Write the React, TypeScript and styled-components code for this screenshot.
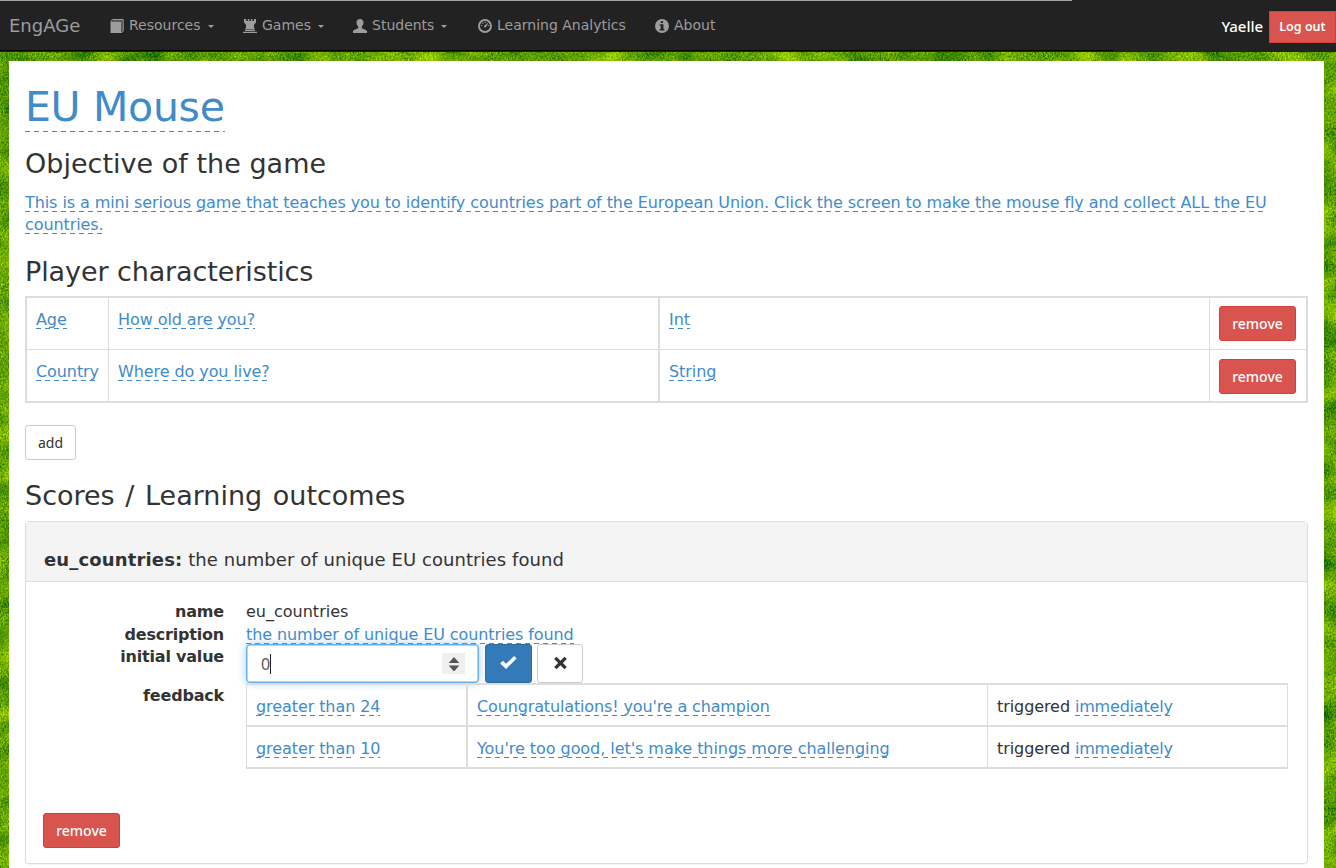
import React from "react";
import styled, { createGlobalStyle } from "styled-components";

const verdana = `"DejaVu Sans", Verdana, sans-serif`;
const sans = `"Noto Sans", "Open Sans", sans-serif`;

const GlobalStyle = createGlobalStyle`
  *, *::before, *::after { box-sizing: border-box; }
  html { height: 100%; overflow: hidden; }
  body { margin: 0; font: 16px/22.5px ${verdana}; color: #333; }
`;

const Shell = styled.div`
  position: relative;
  height: 868px;
  overflow: hidden;
  background: #5a9c00;
`;

const Grass = styled.svg`
  position: absolute;
  inset: 0;
  width: 100%;
  height: 100%;
`;

const Layout = styled.div`
  position: relative;
  display: flex;
  flex-direction: column;
  height: 100%;
`;

const Navbar = styled.nav`
  position: relative;
  display: flex;
  align-items: center;
  flex: none;
  height: 52px;
  padding-left: 9px;
  background: #222;
  color: #9d9d9d;
  &::before {
    content: "";
    position: absolute;
    top: 0;
    left: 0;
    width: 1072px;
    height: 1px;
    background: #a5a5a5;
  }
  &::after {
    content: "";
    position: absolute;
    top: 50px;
    left: 0;
    width: 1114px;
    height: 1px;
    background: #080808;
  }
`;

const Brand = styled.span`
  width: 101px;
  padding-top: 1px;
  font-size: 18px;
`;

const NavItem = styled.a<{ $w: number }>`
  display: flex;
  align-items: center;
  width: ${(p) => p.$w}px;
  height: 22px;
  margin-bottom: 1px;
  font-size: 14px;
  white-space: nowrap;
  svg { flex: none; margin-right: 5px; }
`;

const Caret = styled.i`
  margin: 2px 0 0 7px;
  border: 3px solid transparent;
  border-top-color: currentColor;
  border-bottom: 0;
`;

const UserName = styled.span`
  margin-left: auto;
  margin-right: 6px;
  margin-bottom: 1px;
  color: #fff;
  font: 500 15px/20px ${sans};
  letter-spacing: -0.05px;
`;

const Button = styled.button<{
  $kind: "danger" | "default" | "primary";
  $w: number;
  $h?: number;
  $small?: boolean;
}>`
  display: inline-flex;
  align-items: center;
  justify-content: center;
  flex: none;
  width: ${(p) => p.$w}px;
  height: ${(p) => p.$h || 35}px;
  padding: 0;
  border-radius: ${(p) => (p.$small ? 0 : 3)}px;
  border: 1px solid ${(p) => ({ danger: "#d43f3a", default: "#ccc", primary: "#2e6da4" })[p.$kind]};
  background: ${(p) => ({ danger: "#d9534f", default: "#fff", primary: "#337ab7" })[p.$kind]};
  color: ${(p) => (p.$kind === "default" ? "#333" : "#fff")};
  font: ${(p) => (p.$small ? "600 12.5px" : p.$kind === "danger" ? "500 14px" : "400 14px")}/20px ${sans};
  ${(p) => p.$small && "margin-top: 2px;"}
`;

const Page = styled.main`
  flex: 1;
  margin: 9px 12px 0 9px;
  padding: 21px 16px 0;
  background: #fff;
`;

const Editable = styled.a<{ $ls?: number }>`
  color: #428bca;
  letter-spacing: ${(p) => p.$ls ?? -0.08}px;
  background: repeating-linear-gradient(90deg, #428bca 0 5px, transparent 5px 9px) left bottom / 100% 1px no-repeat;
  box-decoration-break: clone;
  -webkit-box-decoration-break: clone;
`;

const Title = styled.h1`
  margin: 0;
  height: 64px;
  font-size: 41px;
  font-weight: 400;
  line-height: 50px;
  a { display: inline-block; height: 49.5px; }
`;

const Heading = styled.h2<{ $top: number; $ls?: number; $ws?: number }>`
  margin: ${(p) => p.$top}px 0 0;
  font-size: 27px;
  font-weight: 400;
  line-height: 36px;
  letter-spacing: ${(p) => p.$ls || 0}px;
  word-spacing: ${(p) => p.$ws || 0}px;
`;

const Objective = styled.p`
  margin: 10px 0 0;
  line-height: 22px;
`;

const Characteristics = styled.div`
  margin-top: 6px;
  border: 2px solid #ddd;
`;

const CharRow = styled.div`
  display: grid;
  grid-template-columns: 81px 550px 551px 1fr;
  height: 51px;
  & + & { border-top: 1px solid #ddd; height: 52px; }
`;

const Cell = styled.div<{ $line?: number; $pad?: number }>`
  padding: ${(p) => p.$pad ?? 11}px 9px 0;
  border-left: ${(p) => p.$line || 0}px solid #ddd;
  white-space: nowrap;
`;

const AddRow = styled.div`
  display: flex;
  margin-top: 22px;
`;

const Panel = styled.section`
  margin-top: 7px;
  height: 343px;
  border: 1px solid #ddd;
  border-radius: 4px;
  box-shadow: 0 1px 1px rgba(0, 0, 0, 0.05);
`;

const PanelHeading = styled.header`
  height: 60px;
  padding: 27px 18px 0;
  background: #f4f4f4;
  border-bottom: 1px solid #ddd;
  font-size: 18px;
  letter-spacing: 0.07px;
  b { letter-spacing: 0.15px; }
`;

const Details = styled.dl`
  display: grid;
  grid-template-columns: 198px 1fr;
  grid-template-rows: 22.5px 22.5px 39px auto;
  column-gap: 22px;
  margin: 19px 19px 0 0;
  dt { text-align: right; font-weight: 700; letter-spacing: -0.2px; }
  dd { margin: 0; }
`;

const EditRow = styled.div`
  display: flex;
  align-items: center;
  gap: 5px;
  height: 39px;
  margin-top: -2px;
`;

const NumberField = styled.div`
  display: flex;
  align-items: center;
  justify-content: space-between;
  width: 233px;
  height: 39px;
  margin-right: 1px;
  padding: 0 13px 0 14px;
  background: #fff;
  border: 1px solid #66afe9;
  border-radius: 4px;
  box-shadow: 0 0 8px rgba(102, 175, 233, 0.6), inset 0 0 0 0.5px #66afe9;
  color: #555;
  font: 16px/20px ${sans};
`;

const Typed = styled.span`
  border-right: 1px solid #222;
`;

const Spinner = styled.span`
  display: flex;
  align-items: center;
  justify-content: center;
  width: 23px;
  height: 21px;
  background: #efefef;
`;

const Feedback = styled.div`
  margin-top: -2px;
  border: 1px solid #ddd;
  border-width: 2px 1px;
`;

const FeedbackRow = styled.div`
  display: grid;
  grid-template-columns: 219px 521px 1fr;
  height: 40px;
  letter-spacing: -0.08px;
  & + & { border-top: 2px solid #ddd; height: 42px; }
`;

const PanelFooter = styled.footer`
  display: flex;
  margin: 44px 0 0 17px;
`;

const Glyph = ({ name, size = 14 }: { name: string; size?: number }) => (
  <svg width={size} height={size} viewBox="0 0 14 14" fill="currentColor">
    {name === "book" && (
      <>
        <path d="M.5 2.600H11V14H.5Z" />
        <path d="M.6 2.400 2.600.5H13.200V12.200L11 14" fill="none" stroke="currentColor" strokeWidth="1" />
        <path d="M1.500 2.600 3 1H12.700V12L11 13.500V2.600Z" opacity=".4" />
      </>
    )}
    {name === "tower" && (
      <path d="M1 0h2.200v2h1.600V0h1.500v2h1.600V0h1.500v2H11V0H13v3.600L11 5.800v2.700l1 2H2l1-2V5.800L1 3.600ZM2 11h10v1H2ZM0 12.800h14V14H0Z" />
    )}
    {name === "user" && (
      <path d="M7 0c2.200 0 3.500 1.400 3.500 3.600 0 1.700-.7 3.200-1.700 4v1.500c0 .7 4.900 1.600 5.200 3.200V14H0v-1.700c.3-1.600 5.200-2.500 5.200-3.200V7.600c-1-.8-1.700-2.300-1.700-4C3.500 1.400 4.800 0 7 0Z" />
    )}
    {name === "dashboard" && (
      <>
        <circle cx="7" cy="7" r="6" fill="none" stroke="currentColor" strokeWidth="1.900" />
        <path d="M6 7 10.600 3.300 8 8.200Q7 9 6.200 8.200Z" />
        <circle cx="3.600" cy="6.600" r=".7" />
        <circle cx="4.800" cy="4.300" r=".7" />
        <circle cx="7.200" cy="3.400" r=".7" />
        <circle cx="10.400" cy="6.600" r=".7" />
      </>
    )}
    {name === "info" && (
      <path
        fillRule="evenodd"
        d="M7 0a7 7 0 1 1 0 14A7 7 0 0 1 7 0ZM5.700 2.200v1.900h2.400V2.200ZM4.700 5.300v1.200h1v3.600h-1v1.300h4.700v-1.300h-1V5.300Z"
      />
    )}
    {name === "ok" && <path d="M.2 6.900 2.300 4.700 5 7.300 11.600.8 13.700 2.900 5 11.500Z" />}
    {name === "remove" && (
      <path d="M3.300.7 7 4.400l3.700-3.700 2.200 2.200L9.200 6.500l3.700 3.700-2.200 2.200L7 8.700l-3.700 3.700-2.200-2.200L4.800 6.500 1.100 2.900Z" />
    )}
    {name === "spin" && <path d="M7 0 12.300 6H1.700ZM7 14.500 12.300 8.500H1.700Z" />}
  </svg>
);

const characteristics = [
  { name: "Age", question: "How old are you?", type: "Int", pad: 8 },
  { name: "Country", question: "Where do you live?", type: "String", pad: 9 },
];

const feedback = [
  { limit: "24", message: "Coungratulations! you're a champion", spacing: -0.14 },
  { limit: "10", message: "You're too good, let's make things more challenging", spacing: -0.05 },
];

export default function App() {
  return (
    <Shell>
      <GlobalStyle />
      <Grass>
        <filter id="grass" x="0" y="0" width="100%" height="100%" colorInterpolationFilters="sRGB">
          <feTurbulence type="fractalNoise" baseFrequency="0.03 0.04" numOctaves="2" seed="4" result="coarse" />
          <feTurbulence type="fractalNoise" baseFrequency="0.6 0.5" numOctaves="2" seed="9" result="fine" />
          <feComposite in="coarse" in2="fine" operator="arithmetic" k2="0.5" k3="0.5" />
          <feColorMatrix values="1.4 0 0 0 -0.32  1.05 0 0 0 0.11  0 0 0 0 0.01  0 0 0 0 1" />
        </filter>
        <rect width="100%" height="100%" filter="url(#grass)" />
      </Grass>
      <Layout>
        <Navbar>
          <Brand>EngAGe</Brand>
          <NavItem $w={133}><Glyph name="book" />Resources<Caret /></NavItem>
          <NavItem $w={110}><Glyph name="tower" />Games<Caret /></NavItem>
          <NavItem $w={125}><Glyph name="user" />Students<Caret /></NavItem>
          <NavItem $w={177}><Glyph name="dashboard" />Learning Analytics</NavItem>
          <NavItem $w={70}><Glyph name="info" />About</NavItem>
          <UserName>Yaelle</UserName>
          <Button $kind="danger" $w={67} $h={32} $small>Log out</Button>
        </Navbar>
        <Page>
          <Title><Editable $ls={-0.3}>EU Mouse</Editable></Title>
          <Heading $top={0} $ls={0.02}>Objective of the game</Heading>
          <Objective>
            <Editable>
              This is a mini serious game that teaches you to identify countries part of the European Union. Click the screen to make the mouse fly and collect ALL the EU<br />countries.
            </Editable>
          </Objective>
          <Heading $top={18} $ls={-0.1}>Player characteristics</Heading>
          <Characteristics>
            {characteristics.map((c) => (
              <CharRow key={c.name}>
                <Cell><Editable>{c.name}</Editable></Cell>
                <Cell $line={1}><Editable>{c.question}</Editable></Cell>
                <Cell $line={2}><Editable>{c.type}</Editable></Cell>
                <Cell $line={1} $pad={c.pad}><Button $kind="danger" $w={77}>remove</Button></Cell>
              </CharRow>
            ))}
          </Characteristics>
          <AddRow><Button $kind="default" $w={51}>add</Button></AddRow>
          <Heading $top={18} $ls={0} $ws={2}>Scores / Learning outcomes</Heading>
          <Panel>
            <PanelHeading><b>eu_countries:</b> the number of unique EU countries found</PanelHeading>
            <Details>
              <dt>name</dt>
              <dd>eu_countries</dd>
              <dt>description</dt>
              <dd><Editable $ls={-0.1}>the number of unique EU countries found</Editable></dd>
              <dt>initial value</dt>
              <dd>
                <EditRow>
                  <NumberField>
                    <Typed>0</Typed>
                    <Spinner><Glyph name="spin" /></Spinner>
                  </NumberField>
                  <Button $kind="primary" $w={47} $h={39}><Glyph name="ok" size={17} /></Button>
                  <Button $kind="default" $w={46} $h={39}><Glyph name="remove" size={15} /></Button>
                </EditRow>
              </dd>
              <dt>feedback</dt>
              <dd>
                <Feedback>
                  {feedback.map((f) => (
                    <FeedbackRow key={f.limit}>
                      <Cell><Editable>greater than</Editable> <Editable>{f.limit}</Editable></Cell>
                      <Cell $line={2}><Editable $ls={f.spacing}>{f.message}</Editable></Cell>
                      <Cell $line={1}>triggered <Editable $ls={-0.2}>immediately</Editable></Cell>
                    </FeedbackRow>
                  ))}
                </Feedback>
              </dd>
            </Details>
            <PanelFooter><Button $kind="danger" $w={77}>remove</Button></PanelFooter>
          </Panel>
        </Page>
      </Layout>
    </Shell>
  );
}
